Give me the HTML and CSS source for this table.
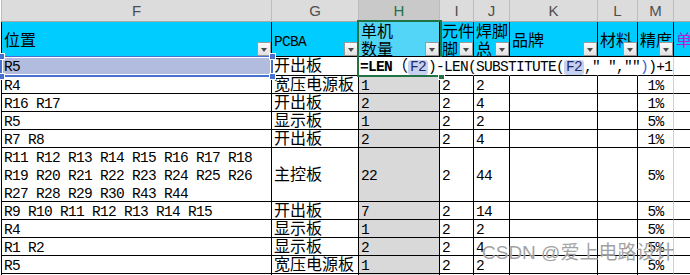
FILE: index.html
```html
<!DOCTYPE html>
<html lang="zh">
<head>
<meta charset="utf-8">
<title>Sheet</title>
<link rel="stylesheet" href="styles.css">
</head>
<body>
<div class="sheet">
  <div class="grid">
    <div class="c lt first">F</div>
    <div class="c lt">G</div>
    <div class="c lt on">H</div>
    <div class="c lt">I</div>
    <div class="c lt">J</div>
    <div class="c lt">K</div>
    <div class="c lt">L</div>
    <div class="c lt">M</div>
    <div class="c lt last"></div>

    <div class="c hd first zh"><span>位置</span><i class="flt"></i></div>
    <div class="c hd"><span>PCBA</span><i class="flt"></i></div>
    <div class="c hd zh sel"><span>单机<br>数量</span><i class="flt"></i></div>
    <div class="c hd zh"><span>元件<br>脚</span><i class="flt"></i></div>
    <div class="c hd zh"><span>焊脚<br>总</span><i class="flt"></i></div>
    <div class="c hd zh"><span>品牌</span><i class="flt"></i></div>
    <div class="c hd zh"><span>材料</span><i class="flt"></i></div>
    <div class="c hd zh"><span>精度</span><i class="flt"></i></div>
    <div class="c hd zh last purple"><span>单</span></div>

    <div class="c d first refc">R5</div>
    <div class="c d zh">开出板</div>
    <div class="c d act"><span class="fx"><b>=LEN</b><span class="fw">（</span><span class="ref">F2</span>)-LEN(SUBSTITUTE(<span class="ref">F2</span>,"&nbsp;",""<span class="blu">)</span>)+1</span></div>
    <div class="c d ovf"></div>
    <div class="c d ovf"></div>
    <div class="c d ovf"></div>
    <div class="c d ovf"></div>
    <div class="c d ovf m"></div>
    <div class="c d last"></div>

    <div class="c d first">R4</div>
    <div class="c d zh">宽压电源板</div>
    <div class="c d g">1</div>
    <div class="c d">2</div>
    <div class="c d">2</div>
    <div class="c d"></div>
    <div class="c d"></div>
    <div class="c d mc m">1%</div>
    <div class="c d last"></div>

    <div class="c d first">R16 R17</div>
    <div class="c d zh">开出板</div>
    <div class="c d g">2</div>
    <div class="c d">2</div>
    <div class="c d">4</div>
    <div class="c d"></div>
    <div class="c d"></div>
    <div class="c d mc m">1%</div>
    <div class="c d last"></div>

    <div class="c d first">R5</div>
    <div class="c d zh">显示板</div>
    <div class="c d g">1</div>
    <div class="c d">2</div>
    <div class="c d">2</div>
    <div class="c d"></div>
    <div class="c d"></div>
    <div class="c d mc m">5%</div>
    <div class="c d last"></div>

    <div class="c d first">R7 R8</div>
    <div class="c d zh">开出板</div>
    <div class="c d g">2</div>
    <div class="c d">2</div>
    <div class="c d">4</div>
    <div class="c d"></div>
    <div class="c d"></div>
    <div class="c d mc m">1%</div>
    <div class="c d last"></div>

    <div class="c d first"><span>R11 R12 R13 R14 R15 R16 R17 R18<br>R19 R20 R21 R22 R23 R24 R25 R26<br>R27 R28 R29 R30 R43 R44</span></div>
    <div class="c d zh">主控板</div>
    <div class="c d g">22</div>
    <div class="c d">2</div>
    <div class="c d">44</div>
    <div class="c d"></div>
    <div class="c d"></div>
    <div class="c d mc m">5%</div>
    <div class="c d last"></div>

    <div class="c d first">R9 R10 R11 R12 R13 R14 R15</div>
    <div class="c d zh">开出板</div>
    <div class="c d g">7</div>
    <div class="c d">2</div>
    <div class="c d">14</div>
    <div class="c d"></div>
    <div class="c d"></div>
    <div class="c d mc m">5%</div>
    <div class="c d last"></div>

    <div class="c d first">R4</div>
    <div class="c d zh">显示板</div>
    <div class="c d g">1</div>
    <div class="c d">2</div>
    <div class="c d">2</div>
    <div class="c d"></div>
    <div class="c d"></div>
    <div class="c d mc m">5%</div>
    <div class="c d last"></div>

    <div class="c d first">R1 R2</div>
    <div class="c d zh">显示板</div>
    <div class="c d g">2</div>
    <div class="c d">2</div>
    <div class="c d">4</div>
    <div class="c d"></div>
    <div class="c d"></div>
    <div class="c d mc m">5%</div>
    <div class="c d last"></div>

    <div class="c d first">R5</div>
    <div class="c d zh">宽压电源板</div>
    <div class="c d g">1</div>
    <div class="c d">2</div>
    <div class="c d">2</div>
    <div class="c d"></div>
    <div class="c d"></div>
    <div class="c d mc m">5%</div>
    <div class="c d last"></div>

    <div class="c d first"></div>
    <div class="c d"></div>
    <div class="c d g"></div>
    <div class="c d"></div>
    <div class="c d"></div>
    <div class="c d"></div>
    <div class="c d"></div>
    <div class="c d m"></div>
    <div class="c d last"></div>
  </div>

  <div class="refbox"><i class="hdl tl"></i><i class="hdl tr"></i><i class="hdl bl"></i><i class="hdl br"></i></div>
  <div class="selbox"></div>
  <div class="watermark">CSDN @爱上电路设计</div>
</div>
</body>
</html>
```

FILE: styles.css
```css
html, body {
  margin: 0;
  padding: 0;
  overflow: hidden;
  background: #fff;
}

.sheet {
  position: relative;
  margin-left: 1px;
  width: max-content;
  font-family: "Liberation Mono", "Noto Sans CJK SC", monospace;
  font-size: 14.5px;
  letter-spacing: -0.7px;
  color: #000;
}

.grid {
  display: grid;
  grid-template-columns: 271px 87px 81px 34px 36px 88px 40px 36px 60px;
  grid-template-rows: 22px 35px 19px repeat(4, 18px) 54px repeat(5, 18px);
}

.c {
  box-sizing: border-box;
  border-right: 1px solid #000;
  border-bottom: 1px solid #000;
  display: flex;
  align-items: center;
  padding: 2px 0 0 2px;
  white-space: nowrap;
  overflow: hidden;
  line-height: 18px;
  background: #fff;
}

.first { border-left: 1px solid #000; }
.last { border-right: none; }
.zh { font-size: 16px; letter-spacing: 0; }

/* column letter row */
.lt {
  background: #dcdcdc;
  border-right-color: #bcbcbc;
  border-bottom-color: #a9a9a9;
  justify-content: center;
  padding: 0;
  font-family: "Liberation Sans", "Open Sans", sans-serif;
  font-size: 15px;
  letter-spacing: 0;
  color: #4f4f4f;
}
.lt.first { border-left-color: #bcbcbc; }
.lt.on { background: #c9c9c9; color: #217346; }

/* header row */
.hd {
  position: relative;
  background: #00ccff;
  padding-top: 6px;
}
.hd.sel { background: #52d5f6; }
.purple { color: #b020d8; }

.flt {
  position: absolute;
  right: 0;
  bottom: 0;
  width: 14px;
  height: 14px;
  box-sizing: border-box;
  border: 1px solid #9a9a9a;
  background: linear-gradient(#fbfbfb, #e1e1e1);
}
.flt::after {
  content: "";
  position: absolute;
  left: 3px;
  top: 5px;
  border-left: 3.5px solid transparent;
  border-right: 3.5px solid transparent;
  border-top: 4px solid #4a4a4a;
}

/* data */
.g { background: #d9d9d9; }
.refc { background: #b1bcdf; }
.ovf { border-right-color: transparent; }
.mc { justify-content: center; padding-left: 0; }
.m { border-right-color: #d0d0d0; }

.act {
  position: relative;
  overflow: visible;
}
.fx {
  position: absolute;
  left: 1px;
  top: 0;
  bottom: 0;
  z-index: 5;
  display: flex;
  align-items: center;
  padding-top: 2px;
  box-sizing: border-box;
  background: #fff;
  white-space: pre;
}
.fx b { font-weight: bold; }
.fw { font-size: 16px; letter-spacing: 0; }
.ref {
  background: #c8d0f0;
  border-radius: 3px;
  padding: 0 2px;
  color: #1c2a6a;
  line-height: 15px;
}
.blu { color: #3a62d8; }

/* overlays */
.refbox {
  position: absolute;
  left: -1px;
  top: 56px;
  width: 273px;
  height: 21px;
  box-sizing: border-box;
  border: 2px solid #4870d0;
  border-top-width: 1px;
  box-shadow: inset 0 0 0 1px #fff;
  z-index: 3;
}
.hdl {
  position: absolute;
  width: 5px;
  height: 5px;
  box-sizing: border-box;
  background: #4870d0;
  outline: 1px solid #fff;
}
.hdl.tl { left: -3px; top: -3px; }
.hdl.tr { right: -4px; top: -3px; }
.hdl.bl { left: -3px; bottom: -4px; }
.hdl.br { right: -4px; bottom: -4px; }

.selbox {
  position: absolute;
  left: 356px;
  top: 20px;
  width: 85px;
  height: 57px;
  box-sizing: border-box;
  border: 2px solid #217346;
  z-index: 4;
}
.selbox::after {
  content: "";
  position: absolute;
  right: -4px;
  bottom: -4px;
  width: 5px;
  height: 5px;
  background: #217346;
  outline: 1px solid #fff;
}

.watermark {
  position: absolute;
  left: 481px;
  top: 242px;
  font-family: "Liberation Sans", "Noto Sans CJK SC", sans-serif;
  font-size: 19px;
  letter-spacing: 0;
  line-height: 22px;
  color: rgba(130, 130, 130, 0.75);
  text-shadow: 0 0 1px #fff;
  white-space: nowrap;
  z-index: 6;
}
```
